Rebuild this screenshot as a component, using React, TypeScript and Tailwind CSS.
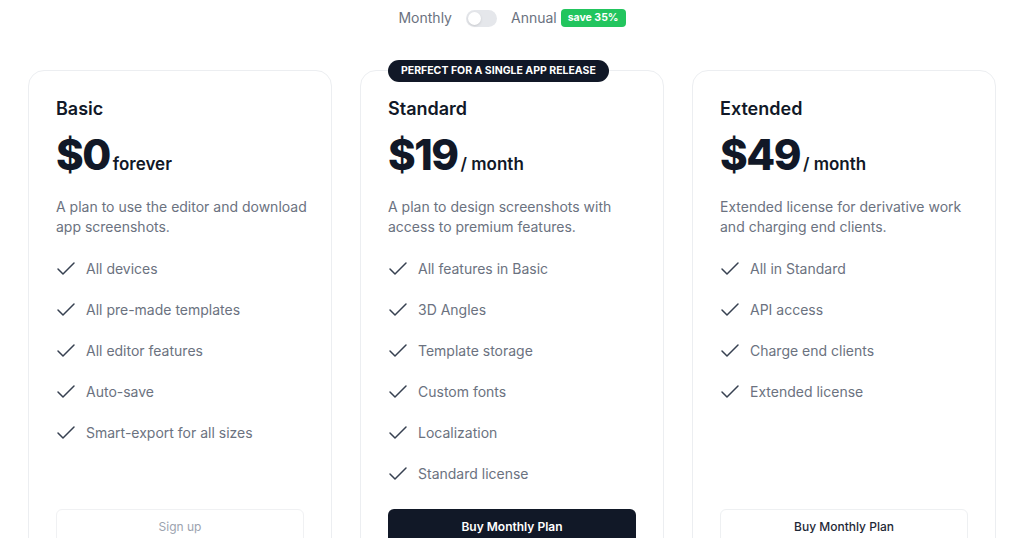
import { Check } from 'lucide-react';

type Plan = {
  name: string;
  price: string;
  suffix: string;
  desc: string;
  features: string[];
  cta: string;
  variant: 'muted' | 'dark' | 'outline';
};

const PLANS: Plan[] = [
  {
    name: 'Basic',
    price: '$0',
    suffix: 'forever',
    desc: 'A plan to use the editor and download app screenshots.',
    features: ['All devices', 'All pre-made templates', 'All editor features', 'Auto-save', 'Smart-export for all sizes'],
    cta: 'Sign up',
    variant: 'muted',
  },
  {
    name: 'Standard',
    price: '$19',
    suffix: '/ month',
    desc: 'A plan to design screenshots with access to premium features.',
    features: ['All features in Basic', '3D Angles', 'Template storage', 'Custom fonts', 'Localization', 'Standard license'],
    cta: 'Buy Monthly Plan',
    variant: 'dark',
  },
  {
    name: 'Extended',
    price: '$49',
    suffix: '/ month',
    desc: 'Extended license for derivative work and charging end clients.',
    features: ['All in Standard', 'API access', 'Charge end clients', 'Extended license'],
    cta: 'Buy Monthly Plan',
    variant: 'outline',
  },
];

const BUTTON_STYLES = {
  muted: 'border border-[#f0f1f3] bg-white font-normal text-[#9ca3af]',
  dark: 'bg-[#111827] font-semibold text-white',
  outline: 'border border-[#eef0f2] bg-white font-medium text-[#1f2937]',
};

function PlanCard({ plan }: { plan: Plan }) {
  return (
    <div className="relative flex h-[500px] flex-col rounded-2xl border border-[#eceef1] bg-white px-[27px] pt-6 pb-6">
      {/* badge over the top border */}
      {plan.variant === 'dark' && (
        <div className="absolute left-[27px] -top-[11px] whitespace-nowrap rounded-full bg-[#111827] px-[13px] py-[4px] text-[10.5px] font-bold uppercase leading-[14px] text-white">
          Perfect for a single app release
        </div>
      )}
      <h3 className="text-lg font-semibold leading-7 text-[#111827]">{plan.name}</h3>
      <div className="mt-[9px] flex items-baseline gap-[3px]">
        <span className="text-[42px] font-extrabold leading-[46px] tracking-[-1.5px] text-[#111827]">{plan.price}</span>
        <span className="text-[17px] font-semibold text-[#111827]">{plan.suffix}</span>
      </div>
      <p className="-mr-[8px] mt-[19px] text-sm leading-5 text-[#6b7280]">{plan.desc}</p>
      <ul className="mt-[22px] flex flex-col gap-[21px]">
        {plan.features.map(f => (
          <li key={f} className="flex items-center gap-2 text-sm leading-5 text-[#6b7280]">
            <Check className="-ml-[2px] h-6 w-6 -my-[2px] text-[#374151]" strokeWidth={1.5} />
            {f}
          </li>
        ))}
      </ul>
      <button className={`mt-auto h-[36px] w-full shrink-0 rounded-md text-xs ${BUTTON_STYLES[plan.variant]}`}>
        {plan.cta}
      </button>
    </div>
  );
}

export default function App() {
  return (
    <div className="min-h-screen bg-white px-7 pt-[9px]" style={{ fontFamily: 'Inter, "Noto Sans", sans-serif' }}>
      {/* billing toggle */}
      <div className="flex items-center justify-center text-sm leading-4 text-[#6b7280]">
        <span>Monthly</span>
        <div className="mx-[14px] flex h-[17px] w-[31px] items-center rounded-full bg-[#e5e7eb] px-[2px]">
          <div className="h-[13px] w-[13px] rounded-full bg-white shadow-sm" />
        </div>
        <span>Annual</span>
        <span className="ml-[4px] rounded-[4px] bg-[#22c55e] px-[7px] py-[2px] text-[10.5px] font-bold leading-[14px] text-white">save 35%</span>
      </div>

      <div className="mt-[43px] grid grid-cols-3 gap-7">
        {PLANS.map(p => (
          <PlanCard key={p.name} plan={p} />
        ))}
      </div>
    </div>
  );
}
